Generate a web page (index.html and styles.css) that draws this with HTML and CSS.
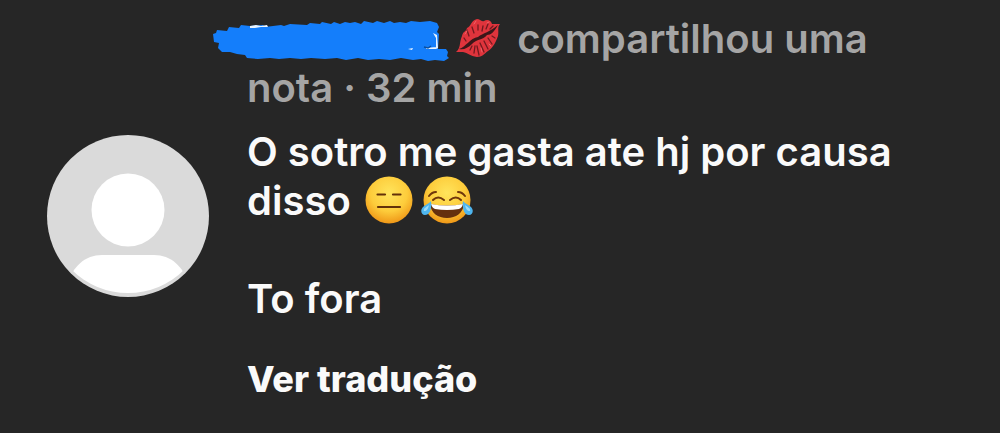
FILE: index.html
```html
<!DOCTYPE html>
<html lang="pt-BR">
<head>
  <meta charset="UTF-8">
  <meta name="viewport" content="width=device-width, initial-scale=1">
  <title>Nota</title>
  <link rel="stylesheet" href="styles.css">
</head>
<body>

  <article class="nota">
    <svg class="avatar" viewBox="0 0 162 162" aria-hidden="true">
      <defs>
        <clipPath id="recorte"><circle cx="81" cy="78" r="80"/></clipPath>
      </defs>
      <circle cx="81" cy="81" r="81" fill="#dadada"/>
      <circle cx="81" cy="75" r="36.5" fill="#fff"/>
      <path d="M20 150C26 131 38 120 55 120H107C124 120 136 131 142 150V162H20Z" fill="#fff" clip-path="url(#recorte)"/>
    </svg>

    <div class="conteudo">
      <p class="cabecalho">
        <span class="nome">
          <svg class="risco" viewBox="0 0 236 44" aria-hidden="true">
            <path fill="#147efb" d="M0 13L3 12 4 9 14 10 16 6 26 7 28 4 37 5 50 4 52 6 68 4 71 5 77 3 94 4 97 2 107 3 109 1 118 3 121 1 127 3 132 1 137 2 142 1 148 3 151 0 160 2 164 0 171 2 177 0 181 2 187 1 193 2 198 0 207 1 217 0 224 2 226 6 224 11 226 13 225 28 233 28 235 31 234 35 236 37 231 40 222 39 215 40 208 38 200 39 188 37 177 39 166 38 155 39 145 37 133 39 124 37 112 38 98 37 88 38 77 37 66 38 57 37 45 38 34 37 32 34 24 33 17 31 9 31 5 27 6 22 1 21Z"/>
            <path fill="#e8f3ff" d="M37 5L43 4 48 5 54 4 55 6 48 6 42 7 37 7ZM220 12L224 14 225 27 223 28 223 17ZM213 27L223 26 223 28 213 28ZM195 28L200 27 199 29Z"/>
            <path fill="none" stroke="#0b4f9f" stroke-width="1.5" d="M211 26L215 27 218 25"/>
          </svg>
        </span>
        <svg class="beijo" viewBox="0 0 46 40" role="img" aria-label="beijo">
          <path fill="#df343c" d="M1 34C6 30 4 25 7 18 8 13 11 14 12 10 16 9 16 2 22 1 25 1 26 4 29 3 32 1 36 2 37 6L45 6C42 9 44 13 43 18 41 23 39 29 33 33 29 36 27 39 22 39 15 38 13 35 8 34Z"/>
          <path fill="#3b1719" d="M4 31C11 29 15 20 23 19 28 15 35 14 43 7 39 14 36 17 32 17 29 22 21 21 17 26 13 30 9 32 4 31Z"/>
          <path fill="none" stroke="#71191f" stroke-width="1.3" stroke-linecap="round" d="M12 12L14 18M17 9L19 15M23 7V12M28 8L27 13M33 6L31 11M38 8L35 11M9 20L11 23M15 32L17 28M19 35L20 28M24 37L22 28M29 34L25 25M33 31L29 23M37 26L33 20M40 20L37 18"/>
          <path fill="none" stroke="#f06469" stroke-linecap="round" d="M10 16L12 13M19 6L21 3M32 5L34 4M27 34L26 30M36 28L34 26"/>
        </svg>
        compartilhou uma<br>
        nota · 32 min
      </p>

      <p class="texto">
        O sotro me gasta ate hj por causa<br>
        disso
        <svg class="emoji" viewBox="0 0 48 48" role="img" aria-label="sem expressão">
          <defs>
            <radialGradient id="amarelo" cx="50%" cy="35%" r="65%">
              <stop offset="0" stop-color="#ffe45c"/>
              <stop offset="0.6" stop-color="#fdcc3b"/>
              <stop offset="1" stop-color="#ef9717"/>
            </radialGradient>
          </defs>
          <circle cx="24" cy="24" r="23.5" fill="url(#amarelo)"/>
          <path fill="none" stroke="#633109" stroke-width="2.2" stroke-linecap="round" d="M12.500 18.500H20M28 18.500H35.500M13 31H35"/>
        </svg>
        <svg class="emoji chorando" viewBox="0 0 52 48" role="img" aria-label="chorando de rir">
          <circle cx="26" cy="24" r="23.5" fill="url(#amarelo)"/>
          <path fill="none" stroke="#70370b" stroke-width="2" stroke-linecap="round" d="M8 20Q11 16 15 16M37 16Q41 16 44 20M12 24Q17 19 23 24M29 24Q35 19 40 24"/>
          <path fill="#65300e" d="M9 28Q26 31 43 28C42 37 35 42 26 42S10 37 9 28Z"/>
          <path fill="#fff" d="M10 28Q26 31 42 28Q41 32 38 33Q26 35 14 33Q11 32 10 28Z"/>
          <path fill="#4eb5ee" d="M10 25C11 32 9 39 4 39 0 39-1 34 2 31 5 28 8 28 10 25ZM42 25C41 32 43 39 48 39 52 39 53 34 50 31 47 28 44 28 42 25Z"/>
          <path fill="#9edcf8" d="M8 29C7 33 6 35 3 35 2 32 6 31 8 29ZM44 29C45 33 46 35 49 35 50 32 46 31 44 29Z"/>
        </svg><br>
        <br>
        To fora
      </p>

      <button class="traduzir" type="button">Ver tradução</button>
    </div>
  </article>

</body>
</html>
```
FILE: styles.css
```css
body {
  margin: 0;
  background: #262626;
  color: #fafafa;
  font-family: Inter, "Liberation Sans", sans-serif;
  font-size: 40px;
  font-weight: 600;
  line-height: 49px;
}

p {
  margin: 0;
}

.nota {
  display: flex;
  align-items: center;
  gap: 38px;
  padding: 14px 47px 2px;
}

.avatar {
  width: 162px;
  flex: none;
}

.conteudo {
  flex: 1;
}

.cabecalho {
  color: #a5a5a5;
  margin-bottom: 15px;
}

.nome {
  display: inline-block;
  position: relative;
  width: 196px;
  height: 30px;
}

/* rabisco por cima do nome */
.risco {
  position: absolute;
  left: -34px;
  top: -2px;
  width: 236px;
}

.beijo {
  width: 46px;
  height: 40px;
  margin: 0 6px 0 2px;
  vertical-align: -5px;
}

.emoji {
  width: 48px;
  height: 48px;
  margin-left: 4px;
  vertical-align: -9px;
}

.chorando {
  width: 52px;
  margin-left: -2px;
}

.traduzir {
  display: block;
  margin: 32px 0 14px;
  padding: 0;
  border: none;
  background: none;
  color: #fafafa;
  font: inherit;
  font-size: 36px;
  font-weight: 800;
  cursor: pointer;
}
```
